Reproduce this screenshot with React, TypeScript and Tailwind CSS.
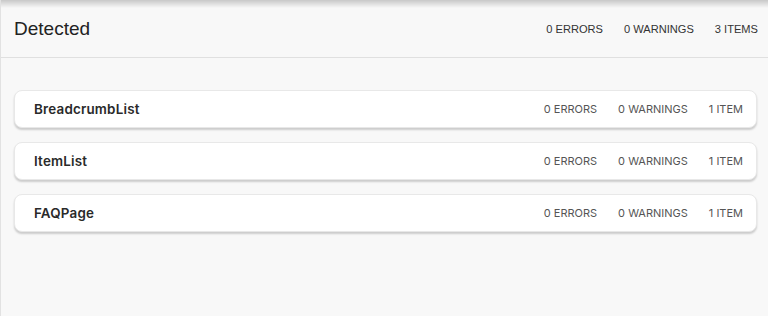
import React from "react";

const rows = ["BreadcrumbList", "ItemList", "FAQPage"];

export default function App() {
  return (
    <div className="w-[768px] h-[316px] bg-[#f8f8f8] relative overflow-hidden border-l border-[#e2e2e2]">
      <div className="absolute top-0 left-0 right-0 h-[8px] bg-gradient-to-b from-[#c8c8c8] to-transparent" />
      <div className="h-[58px] flex items-center justify-between pl-[13px] pr-[10px] border-b border-[#e0e0e0]" style={{ fontFamily: '"Liberation Sans", Arial, sans-serif' }}>
        <div className="text-[19px] text-[#222] mt-[2px]">Detected</div>
        <div className="flex gap-[21px] text-[11.1px] text-[#333] mt-[2px]">
          <span>0 ERRORS</span>
          <span>0 WARNINGS</span>
          <span>3 ITEMS</span>
        </div>
      </div>
      <div className="flex flex-col gap-[14px] pt-[32px] pl-[13px] pr-[11px]" style={{ fontFamily: 'Inter, sans-serif' }}>
        {rows.map((r) => (
          <div key={r} className="h-[38px] bg-white rounded-[8px] border border-[#e8e8e8] shadow-[0_2px_2px_rgba(0,0,0,0.18)] flex items-center justify-between pl-[19px] pr-[13px]">
            <span className="text-[13.4px] font-semibold text-[#2a2a2a] tracking-[0.2px]">{r}</span>
            <div className="flex gap-[21px] text-[11px] text-[#555]">
              <span>0 ERRORS</span>
              <span>0 WARNINGS</span>
              <span>1 ITEM</span>
            </div>
          </div>
        ))}
      </div>
    </div>
  );
}
